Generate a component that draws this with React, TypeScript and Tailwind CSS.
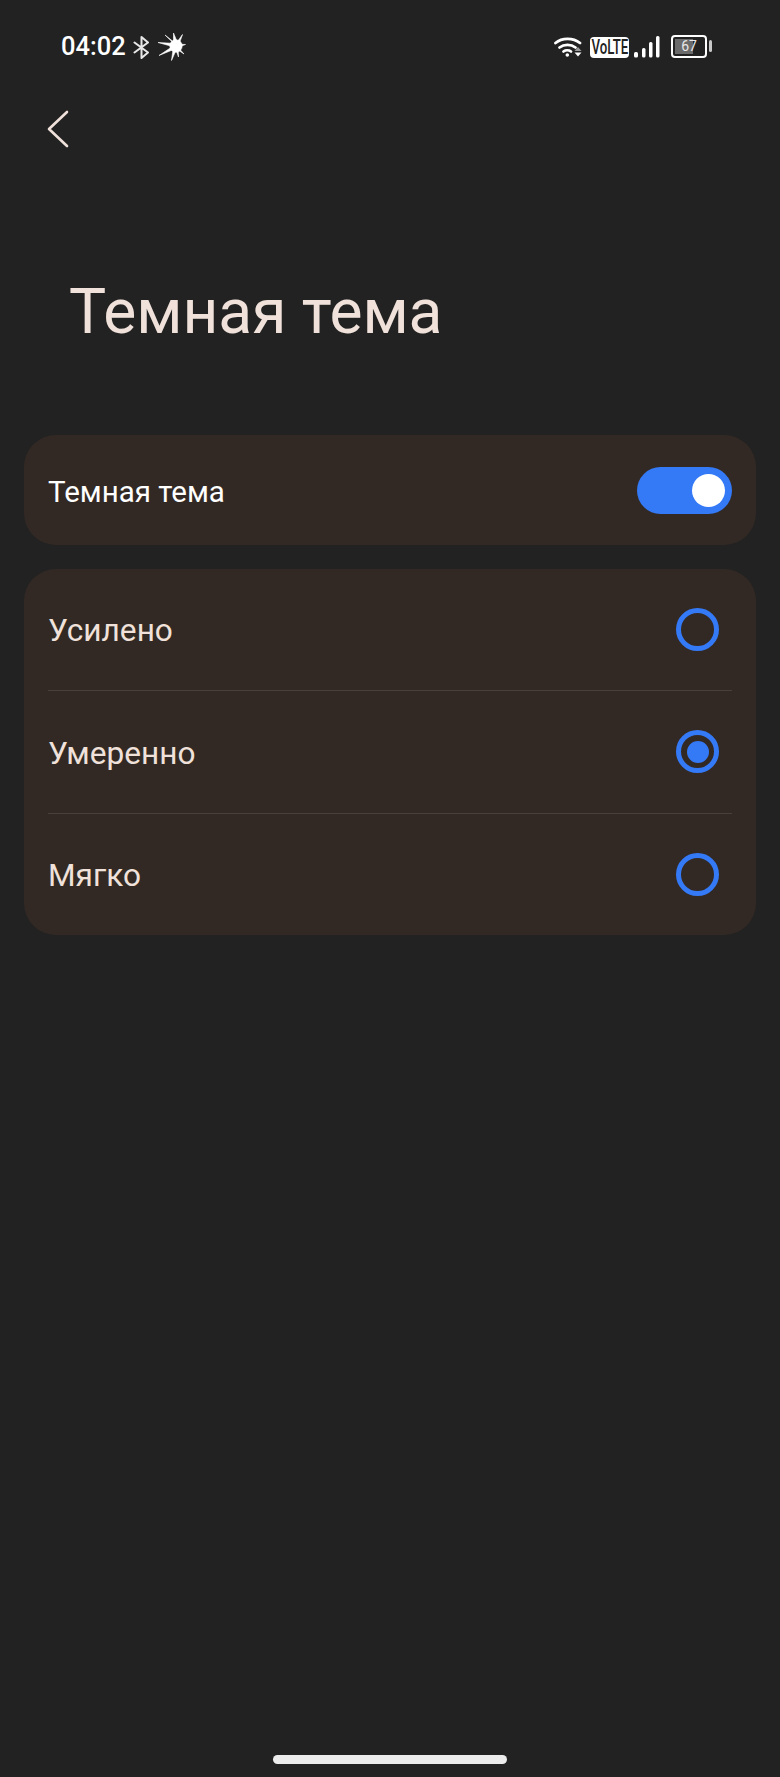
const ROW_LABELS = ["Усилено", "Умеренно", "Мягко"] as const;

function Bluetooth() {
  return (
    <svg width="17" height="23" viewBox="0 0 17 23" fill="none" stroke="#e8e8e8" strokeWidth="2" strokeLinejoin="round" strokeLinecap="round">
      <path d="M1.5 6.5 L15 16.5 L8.5 22 V1 L15 6.5 L1.5 16.5" />
    </svg>
  );
}

function Sparkle() {
  return (
    <svg width="28" height="28" viewBox="0 0 28 28" fill="#fff" stroke="#fff" strokeWidth="0.6" strokeLinejoin="round">
      <circle cx="18" cy="13" r="6.2" />
      <path d="M18 10.5 L0 9.5 L18 14.5 Z" />
      <path d="M17 10 L7 2 L19 13.5 Z" />
      <path d="M16 12.5 L1 22.5 L18 15.5 Z" />
      <path d="M15.5 13 L13.5 27.5 L19.5 14 Z" />
      <path d="M15.5 12 L15.5 0 L20.5 12 Z" />
      <path d="M17 12 L24.5 1.5 L20 14 Z" />
      <path d="M18 11 L27.5 11.5 L18 15 Z" />
      <path d="M18 12 L26 21 L17 15 Z" />
      <path d="M17 14 L20.5 24 L20 13 Z" />
    </svg>
  );
}

function Wifi() {
  return (
    <svg width="28" height="20" viewBox="0 0 28 20" fill="none" stroke="#fff" strokeWidth="2.8" strokeLinecap="round">
      <path d="M1.5 6 C8 0.5 19 0.5 26 6" />
      <path d="M5.5 10.5 C10 7 17 7 21.5 10.5" />
      <path d="M9.5 14.5 C11.5 13 15 13 17 14.5" />
      <circle cx="13.3" cy="18" r="1.8" fill="#fff" stroke="none" />
      <path d="M24 10 L27.5 14 H20.5 Z" fill="#9a9a9a" stroke="none" />
      <path d="M20.5 15.5 H27.5 L24 19.5 Z" fill="#fff" stroke="none" />
    </svg>
  );
}

function SignalBars() {
  return (
    <svg width="26" height="22" viewBox="0 0 26 22" fill="#fff">
      <rect x="0" y="16" width="4" height="5.5" rx="1.5" />
      <rect x="8" y="12" width="3.5" height="9.5" rx="1.5" />
      <rect x="15" y="6" width="3.5" height="15.5" rx="1.5" />
      <rect x="22" y="0" width="3.5" height="21.5" rx="1.5" />
    </svg>
  );
}

function Radio({ selected }: { selected?: boolean }) {
  return (
    <div className="flex h-[43px] w-[43px] items-center justify-center rounded-full border-[5px] border-[#3479f6]">
      {selected && <div className="h-[22px] w-[22px] rounded-full bg-[#3479f6]" />}
    </div>
  );
}

export default function App() {
  return (
    <div className="flex h-[1777px] w-[780px] flex-col overflow-hidden bg-[#222222] font-['Roboto',sans-serif]">
      <div className="flex h-[70px] shrink-0 items-center justify-between pl-[61px] pr-[68px] pt-[24px]">
        <div className="flex items-center">
          <span className="text-[25.5px] font-medium leading-none text-white">04:02</span>
          <div className="ml-[7px]">
            <Bluetooth />
          </div>
          <div className="ml-[8px]">
            <Sparkle />
          </div>
        </div>
        <div className="flex items-center">
          <Wifi />
          <div className="ml-[8px] flex h-[21px] w-[39px] items-center justify-center rounded-[4px] bg-white">
            <span className="shrink-0 scale-x-[0.66] whitespace-nowrap text-[20px] font-medium leading-none text-[#222222]">VoLTE</span>
          </div>
          <div className="ml-[5px]">
            <SignalBars />
          </div>
          <div className="ml-[11px] flex -translate-y-[1px] items-center gap-[2px]">
            <div className="relative flex h-[23px] w-[36px] items-center rounded-[4px] border-2 border-white p-[2px]">
              <div className="h-full w-[64%] bg-[#6b6b6b]" />
              <span className="absolute inset-0 flex items-center justify-center text-[14px] leading-none text-[#e8e8e8]">67</span>
            </div>
            <div className="h-[12px] w-[3px] rounded-full bg-[#c9c9c9]" />
          </div>
        </div>
      </div>

      <div className="flex h-[118px] shrink-0 items-center pl-[47px]">
        <svg width="22" height="38" viewBox="0 0 22 38" fill="none" stroke="#f0e2da" strokeWidth="2.6" strokeLinecap="round" strokeLinejoin="round">
          <path d="M20 2 L2 19 L20 36" />
        </svg>
      </div>

      <h1 className="mt-[87px] pl-[69px] text-[62.3px] font-normal leading-[74px] text-[#f0e2da]">Темная тема</h1>

      <div className="mx-[24px] mt-[86px] flex h-[110px] shrink-0 items-center justify-between rounded-[32px] bg-[#322924] pl-[24px] pr-[24px]">
        <span className="pt-[6px] text-[29.5px] leading-none text-white">Темная тема</span>
        <div className="flex h-[47px] w-[95px] items-center justify-end rounded-full bg-[#3479f6] pr-[7px]">
          <div className="h-[33px] w-[33px] rounded-full bg-white" />
        </div>
      </div>

      <div className="mx-[24px] mt-[24px] flex h-[366px] shrink-0 flex-col rounded-[32px] bg-[#322924] px-[24px]">
        {ROW_LABELS.map((label, i) => (
          <div
            key={label}
            className={`flex flex-1 items-center justify-between border-[#4a403a] ${i < 2 ? "border-b-[1.5px]" : ""}`}
          >
            <span className="pt-[3px] text-[31.6px] leading-none text-[#f0e2da]">{label}</span>
            <div className="mr-[13px]">
              <Radio selected={i === 1} />
            </div>
          </div>
        ))}
      </div>

      <div className="mt-auto flex justify-center pb-[13px]">
        <div className="h-[9px] w-[234px] rounded-full bg-[#ececec]" />
      </div>
    </div>
  );
}
